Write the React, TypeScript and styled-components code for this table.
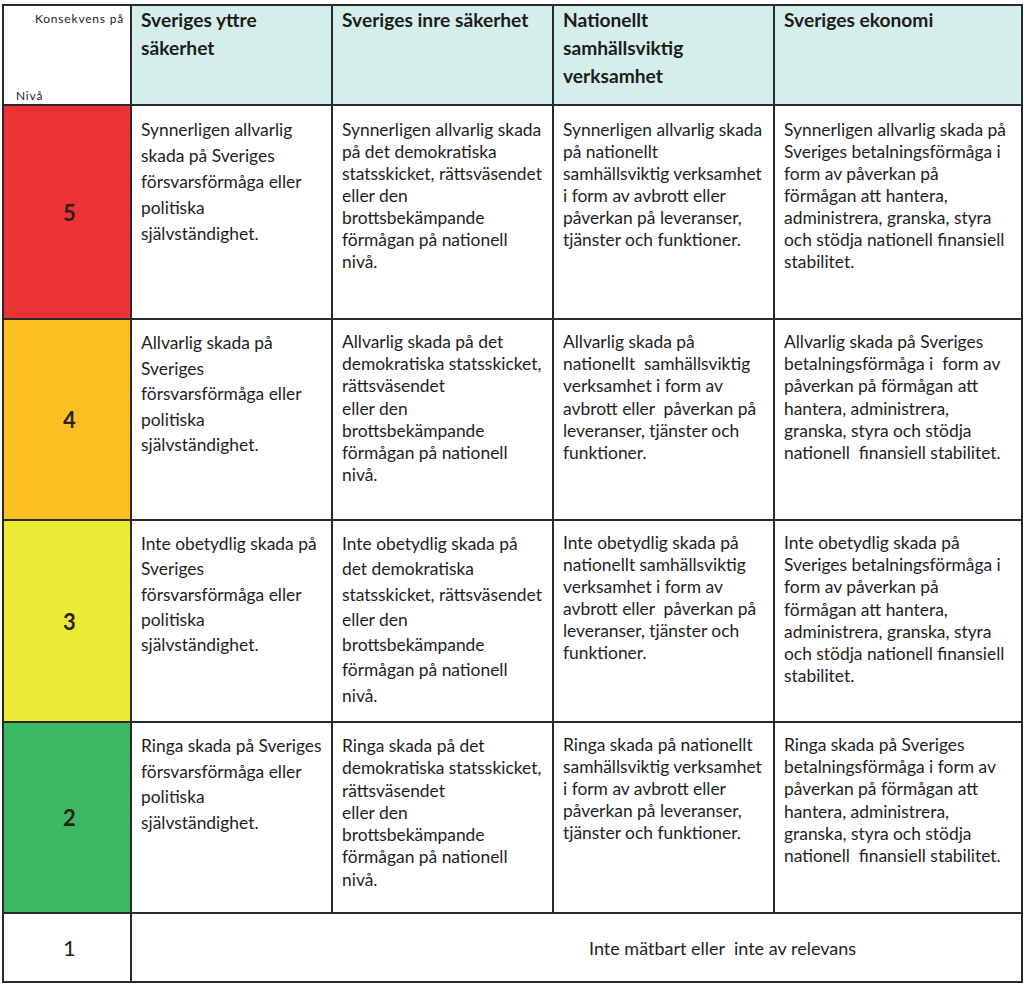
import React from "react";
import styled, { createGlobalStyle } from "styled-components";

const Global = createGlobalStyle`
  html, body { margin: 0; padding: 0; background: #ffffff; }
  body { font-family: Lato, "Open Sans", sans-serif; color: #1e1e1e; }
`;

const Page = styled.div`
  padding: 4px 0 0 2px;
`;

const Table = styled.div`
  display: grid;
  grid-template-columns: 126px 199px 219px 219px 246px;
  grid-template-rows: 98px 212px 199px 200px 189px 67px;
  gap: 2px;
  padding: 2px;
  width: max-content;
  background: #2a2a2a;
`;

const Corner = styled.div`
  background: #ffffff;
  display: flex;
  flex-direction: column;
  justify-content: space-between;
  font-size: 12px;
  letter-spacing: 0.8px;
  color: #222;
  padding: 5px 6px 1px 12px;
`;

const CornerTop = styled.span`
  align-self: flex-end;
`;

const HeaderCell = styled.div`
  background: #d4efe9;
  padding: 0 6px 0 9px;
  font-weight: 700;
  font-size: 19.2px;
  line-height: 28px;
  color: #1c1c1c;
`;

const LevelCell = styled.div<{ $bg: string; $bold?: boolean }>`
  background: ${(p) => p.$bg};
  display: flex;
  align-items: center;
  justify-content: center;
  font-size: 22px;
  font-weight: ${(p) => (p.$bold ? 700 : 400)};
  color: #2b2116;
  padding-left: 5px;
`;

const TextCell = styled.div<{ $lh: number; $pt: number }>`
  background: #ffffff;
  padding: ${(p) => p.$pt}px 4px 0 9px;
  font-size: 17.4px;
  line-height: ${(p) => p.$lh}px;
  color: #1e1e1e;
`;

const Line = styled.span`
  display: block;
  white-space: pre;
`;

const FullCell = styled.div`
  grid-column: 2 / span 4;
  background: #ffffff;
  display: flex;
  align-items: center;
  padding-left: 457px;
  font-size: 18px;
  white-space: pre;
  color: #1e1e1e;
`;

type Cell = { lh: number; pt: number; lines: string[] };
type Row = { level: string; bg: string; cells: Cell[] };

const headers = [
  ["Sveriges yttre", "säkerhet"],
  ["Sveriges inre säkerhet"],
  ["Nationellt", "samhällsviktig", "verksamhet"],
  ["Sveriges ekonomi"],
];

const rows: Row[] = [
  {
    level: "5",
    bg: "#ee3336",
    cells: [
      {
        lh: 26,
        pt: 11,
        lines: [
          "Synnerligen allvarlig",
          "skada på Sveriges",
          "försvarsförmåga eller",
          "politiska",
          "självständighet.",
        ],
      },
      {
        lh: 22,
        pt: 13,
        lines: [
          "Synnerligen allvarlig skada",
          "på det demokratiska",
          "statsskicket, rättsväsendet",
          "eller den",
          "brottsbekämpande",
          "förmågan på nationell",
          "nivå.",
        ],
      },
      {
        lh: 22,
        pt: 13,
        lines: [
          "Synnerligen allvarlig skada",
          "på nationellt",
          "samhällsviktig verksamhet",
          "i form av avbrott eller",
          "påverkan på leveranser,",
          "tjänster och funktioner.",
        ],
      },
      {
        lh: 22,
        pt: 13,
        lines: [
          "Synnerligen allvarlig skada på",
          "Sveriges betalningsförmåga i",
          "form av påverkan på",
          "förmågan att hantera,",
          "administrera, granska, styra",
          "och stödja nationell finansiell",
          "stabilitet.",
        ],
      },
    ],
  },
  {
    level: "4",
    bg: "#fac022",
    cells: [
      {
        lh: 25.5,
        pt: 10,
        lines: [
          "Allvarlig skada på",
          "Sveriges",
          "försvarsförmåga eller",
          "politiska",
          "självständighet.",
        ],
      },
      {
        lh: 22.2,
        pt: 11,
        lines: [
          "Allvarlig skada på det",
          "demokratiska statsskicket,",
          "rättsväsendet",
          "eller den",
          "brottsbekämpande",
          "förmågan på nationell",
          "nivå.",
        ],
      },
      {
        lh: 22.2,
        pt: 11,
        lines: [
          "Allvarlig skada på",
          "nationellt  samhällsviktig",
          "verksamhet i form av",
          "avbrott eller  påverkan på",
          "leveranser, tjänster och",
          "funktioner.",
        ],
      },
      {
        lh: 22.2,
        pt: 11,
        lines: [
          "Allvarlig skada på Sveriges",
          "betalningsförmåga i  form av",
          "påverkan på förmågan att",
          "hantera, administrera,",
          "granska, styra och stödja",
          "nationell  finansiell stabilitet.",
        ],
      },
    ],
  },
  {
    level: "3",
    bg: "#ebeb35",
    cells: [
      {
        lh: 25.3,
        pt: 10,
        lines: [
          "Inte obetydlig skada på",
          "Sveriges",
          "försvarsförmåga eller",
          "politiska",
          "självständighet.",
        ],
      },
      {
        lh: 25.3,
        pt: 10,
        lines: [
          "Inte obetydlig skada på",
          "det demokratiska",
          "statsskicket, rättsväsendet",
          "eller den",
          "brottsbekämpande",
          "förmågan på nationell",
          "nivå.",
        ],
      },
      {
        lh: 22,
        pt: 11,
        lines: [
          "Inte obetydlig skada på",
          "nationellt samhällsviktig",
          "verksamhet i form av",
          "avbrott eller  påverkan på",
          "leveranser, tjänster och",
          "funktioner.",
        ],
      },
      {
        lh: 22.2,
        pt: 11,
        lines: [
          "Inte obetydlig skada på",
          "Sveriges betalningsförmåga i",
          "form av påverkan på",
          "förmågan att hantera,",
          "administrera, granska, styra",
          "och stödja nationell finansiell",
          "stabilitet.",
        ],
      },
    ],
  },
  {
    level: "2",
    bg: "#3db862",
    cells: [
      {
        lh: 25.6,
        pt: 10,
        lines: [
          "Ringa skada på Sveriges",
          "försvarsförmåga eller",
          "politiska",
          "självständighet.",
        ],
      },
      {
        lh: 22.3,
        pt: 12,
        lines: [
          "Ringa skada på det",
          "demokratiska statsskicket,",
          "rättsväsendet",
          "eller den",
          "brottsbekämpande",
          "förmågan på nationell",
          "nivå.",
        ],
      },
      {
        lh: 22,
        pt: 11,
        lines: [
          "Ringa skada på nationellt",
          "samhällsviktig verksamhet",
          "i form av avbrott eller",
          "påverkan på leveranser,",
          "tjänster och funktioner.",
        ],
      },
      {
        lh: 22.2,
        pt: 11,
        lines: [
          "Ringa skada på Sveriges",
          "betalningsförmåga i form av",
          "påverkan på förmågan att",
          "hantera, administrera,",
          "granska, styra och stödja",
          "nationell  finansiell stabilitet.",
        ],
      },
    ],
  },
];

export default function App() {
  return (
    <Page>
      <Global />
      <Table>
        <Corner>
          <CornerTop>Konsekvens på</CornerTop>
          <span>Nivå</span>
        </Corner>
        {headers.map((h, i) => (
          <HeaderCell key={i}>
            {h.map((l) => (
              <Line key={l}>{l}</Line>
            ))}
          </HeaderCell>
        ))}
        {rows.map((r) => (
          <React.Fragment key={r.level}>
            <LevelCell $bg={r.bg} $bold>
              {r.level}
            </LevelCell>
            {r.cells.map((c, i) => (
              <TextCell key={i} $lh={c.lh} $pt={c.pt}>
                {c.lines.map((l, j) => (
                  <Line key={j}>{l}</Line>
                ))}
              </TextCell>
            ))}
          </React.Fragment>
        ))}
        <LevelCell $bg="#ffffff">1</LevelCell>
        <FullCell>Inte mätbart eller  inte av relevans</FullCell>
      </Table>
    </Page>
  );
}
